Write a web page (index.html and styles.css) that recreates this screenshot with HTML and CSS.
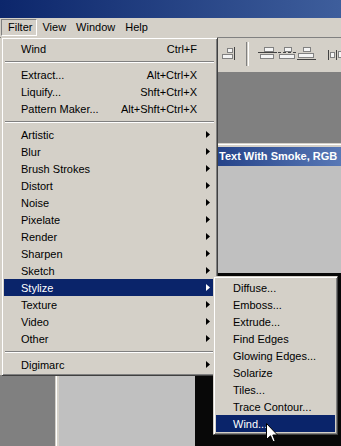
FILE: index.html
```html
<!DOCTYPE html>
<html lang="en">
<head>
  <meta charset="UTF-8">
  <title>Filter menu</title>
  <link rel="stylesheet" href="styles.css">
</head>
<body>
  <div class="screen">

    <div class="titlebar"></div>

    <div class="menubar">
      <span class="menubar-item pressed">Filter</span>
      <span class="menubar-item">View</span>
      <span class="menubar-item">Window</span>
      <span class="menubar-item">Help</span>
    </div>

    <!-- tool options bar (align buttons) -->
    <div class="optionsbar">
      <svg class="opt-icon first" width="14" height="13" viewBox="0 0 14 13">
        <rect x="6.5" y="1.5" width="5" height="4" class="box"/>
        <rect x="1.5" y="7.5" width="10" height="4" class="box"/>
        <line x1="13.5" y1="0" x2="13.5" y2="13" class="edge"/>
      </svg>
      <span class="opt-sep"></span>
      <svg class="opt-icon group" width="19" height="13" viewBox="0 0 19 13">
        <rect x="6.5" y="0.5" width="9" height="4" class="box"/>
        <line x1="0" y1="5.5" x2="19" y2="5.5" class="edge"/>
        <rect x="2.5" y="7.5" width="13" height="4" class="box"/>
      </svg>
      <svg class="opt-icon" width="19" height="13" viewBox="0 0 19 13">
        <rect x="6.5" y="0.5" width="7" height="4" class="box"/>
        <line x1="0" y1="5.5" x2="19" y2="5.5" class="edge dashed"/>
        <rect x="1.5" y="7.5" width="15" height="4" class="box"/>
      </svg>
      <svg class="opt-icon" width="19" height="13" viewBox="0 0 19 13">
        <rect x="6.5" y="0.5" width="7" height="4" class="box"/>
        <rect x="1.5" y="6.5" width="15" height="4" class="box"/>
        <line x1="0" y1="12.5" x2="19" y2="12.5" class="edge"/>
      </svg>
      <svg class="opt-icon last" width="13" height="13" viewBox="0 0 13 13">
        <line x1="0.5" y1="3" x2="0.5" y2="13" class="edge"/>
        <rect x="2.5" y="5.5" width="4" height="5" class="box"/>
        <line x1="8.5" y1="3" x2="8.5" y2="13" class="edge"/>
        <rect x="10.5" y="4.5" width="4" height="6" class="box"/>
      </svg>
    </div>

    <div class="workspace">
      <div class="toolbox"></div>
      <div class="doc">
        <div class="doc-frame">
          <div class="doc-title">Text With Smoke, RGB</div>
          <div class="doc-body">
            <div class="doc-image"></div>
          </div>
        </div>
      </div>
    </div>

    <!-- Filter menu -->
    <div class="menu main-menu">
      <div class="item"><span class="label">Wind</span><span class="shortcut">Ctrl+F</span></div>
      <div class="sep"></div>
      <div class="item"><span class="label">Extract...</span><span class="shortcut">Alt+Ctrl+X</span></div>
      <div class="item"><span class="label">Liquify...</span><span class="shortcut">Shft+Ctrl+X</span></div>
      <div class="item"><span class="label">Pattern Maker...</span><span class="shortcut">Alt+Shft+Ctrl+X</span></div>
      <div class="sep"></div>
      <div class="item"><span class="label">Artistic</span><svg class="arrow" width="4" height="7" viewBox="0 0 4 7"><path d="M0 0 L4 3.5 L0 7 Z"/></svg></div>
      <div class="item"><span class="label">Blur</span><svg class="arrow" width="4" height="7" viewBox="0 0 4 7"><path d="M0 0 L4 3.5 L0 7 Z"/></svg></div>
      <div class="item"><span class="label">Brush Strokes</span><svg class="arrow" width="4" height="7" viewBox="0 0 4 7"><path d="M0 0 L4 3.5 L0 7 Z"/></svg></div>
      <div class="item"><span class="label">Distort</span><svg class="arrow" width="4" height="7" viewBox="0 0 4 7"><path d="M0 0 L4 3.5 L0 7 Z"/></svg></div>
      <div class="item"><span class="label">Noise</span><svg class="arrow" width="4" height="7" viewBox="0 0 4 7"><path d="M0 0 L4 3.5 L0 7 Z"/></svg></div>
      <div class="item"><span class="label">Pixelate</span><svg class="arrow" width="4" height="7" viewBox="0 0 4 7"><path d="M0 0 L4 3.5 L0 7 Z"/></svg></div>
      <div class="item"><span class="label">Render</span><svg class="arrow" width="4" height="7" viewBox="0 0 4 7"><path d="M0 0 L4 3.5 L0 7 Z"/></svg></div>
      <div class="item"><span class="label">Sharpen</span><svg class="arrow" width="4" height="7" viewBox="0 0 4 7"><path d="M0 0 L4 3.5 L0 7 Z"/></svg></div>
      <div class="item"><span class="label">Sketch</span><svg class="arrow" width="4" height="7" viewBox="0 0 4 7"><path d="M0 0 L4 3.5 L0 7 Z"/></svg></div>
      <div class="item active"><span class="label">Stylize</span><svg class="arrow" width="4" height="7" viewBox="0 0 4 7"><path d="M0 0 L4 3.5 L0 7 Z"/></svg></div>
      <div class="item"><span class="label">Texture</span><svg class="arrow" width="4" height="7" viewBox="0 0 4 7"><path d="M0 0 L4 3.5 L0 7 Z"/></svg></div>
      <div class="item"><span class="label">Video</span><svg class="arrow" width="4" height="7" viewBox="0 0 4 7"><path d="M0 0 L4 3.5 L0 7 Z"/></svg></div>
      <div class="item"><span class="label">Other</span><svg class="arrow" width="4" height="7" viewBox="0 0 4 7"><path d="M0 0 L4 3.5 L0 7 Z"/></svg></div>
      <div class="sep"></div>
      <div class="item"><span class="label">Digimarc</span><svg class="arrow" width="4" height="7" viewBox="0 0 4 7"><path d="M0 0 L4 3.5 L0 7 Z"/></svg></div>
    </div>

    <!-- Stylize submenu -->
    <div class="menu sub-menu">
      <div class="item"><span class="label">Diffuse...</span></div>
      <div class="item"><span class="label">Emboss...</span></div>
      <div class="item"><span class="label">Extrude...</span></div>
      <div class="item"><span class="label">Find Edges</span></div>
      <div class="item"><span class="label">Glowing Edges...</span></div>
      <div class="item"><span class="label">Solarize</span></div>
      <div class="item"><span class="label">Tiles...</span></div>
      <div class="item"><span class="label">Trace Contour...</span></div>
      <div class="item active"><span class="label">Wind...</span></div>
    </div>

    <svg class="cursor" width="13" height="21" viewBox="0 0 13 21">
      <path d="M0.5 0.5 L0.5 16.5 L4.5 12.8 L7 18.8 L9.2 17.9 L6.8 12 L11.5 12 Z"/>
    </svg>

  </div>
</body>
</html>
```

FILE: styles.css
```css
body {
  margin: 0;
  font-family: "Liberation Sans", Arial, sans-serif;
  font-size: 11px;
  color: #000;
  background: #808080;
}

.screen {
  position: relative;
  width: 341px;
  height: 446px;
  overflow: hidden;
  background: #808080;
}

.titlebar {
  height: 18px;
  background: linear-gradient(to right, #0c266b, #3e5e9c);
}

.menubar {
  height: 19px;
  display: flex;
  align-items: center;
  padding-left: 1px;
  background: #d4d0c8;
}

.menubar-item {
  height: 15px;
  line-height: 15px;
  padding: 0 4px;
  border: 1px solid transparent;
}

.menubar-item.pressed {
  padding-left: 6px;
  border-color: #808080 #fff #fff #808080;
}

.optionsbar {
  height: 34px;
  display: flex;
  align-items: flex-start;
  padding-left: 221px;
  background: #d4d0c8;
  border-top: 1px solid #808080;
}

.opt-icon {
  margin-top: 9px;
  margin-left: 1px;
  shape-rendering: crispEdges;
}

.opt-icon.first {
  margin-left: 0;
}

.opt-icon.group {
  margin-left: 9px;
}

.opt-icon.last {
  margin-left: 12px;
}

.opt-icon .box {
  fill: #f4f4f4;
  stroke: #808080;
}

.opt-icon .edge {
  stroke: #404040;
}

.opt-icon .dashed {
  stroke-dasharray: 3 2;
}

.opt-sep {
  width: 1px;
  height: 24px;
  margin: 4px 0 0 11px;
  border-left: 1px solid #808080;
  border-right: 1px solid #fff;
}

.workspace {
  display: flex;
  align-items: flex-start;
  height: 374px;
}

.toolbox {
  flex: none;
  width: 28px;
  height: 303px;
  background: #d4d0c8;
}

.doc {
  flex: none;
  width: 420px;
  margin: 71px 0 0 27px;
  border: 1px solid;
  border-color: #d4d0c8 #404040 #404040 #d4d0c8;
}

.doc-frame {
  border: 1px solid;
  border-color: #fff #808080 #808080 #fff;
  padding: 2px;
  background: #d4d0c8;
}

.doc-title {
  height: 19px;
  line-height: 19px;
  padding-left: 160px;
  color: #fff;
  font-weight: bold;
  white-space: nowrap;
  background: linear-gradient(to right, #0a246a 0, #26448a 160px, #5878b6 282px, #a6caf0 412px);
}

.doc-body {
  display: flex;
  align-items: flex-start;
  height: 400px;
  padding: 107px 0 0 136px;
  background: #c0c0c0;
}

.doc-image {
  flex: none;
  width: 300px;
  height: 300px;
  background: #080808;
}

/* menus */

.menu {
  position: absolute;
  box-sizing: border-box;
  padding: 2px;
  background: #d4d0c8;
  border: 1px solid;
  border-color: #d4d0c8 #404040 #404040 #d4d0c8;
  box-shadow: inset 1px 1px #fff, inset -1px -1px #808080;
}

.main-menu {
  left: 1px;
  top: 37px;
  width: 217px;
}

.sub-menu {
  left: 213px;
  top: 276px;
  width: 125px;
}

.item {
  display: flex;
  align-items: center;
  height: 17px;
  padding: 0 5px 0 17px;
  white-space: nowrap;
}

.item .label {
  flex: 1;
}

.item .shortcut {
  margin-right: 13px;
}

.item .arrow {
  fill: currentColor;
}

.item.active {
  background: #0a246a;
  color: #fff;
}

.sep {
  margin: 4px 1px 3px;
  border-top: 1px solid #808080;
  border-bottom: 1px solid #fff;
}

.cursor {
  position: absolute;
  left: 266px;
  top: 423px;
}

.cursor path {
  fill: #fff;
  stroke: #000;
  stroke-width: 1;
  stroke-linejoin: miter;
}
```
